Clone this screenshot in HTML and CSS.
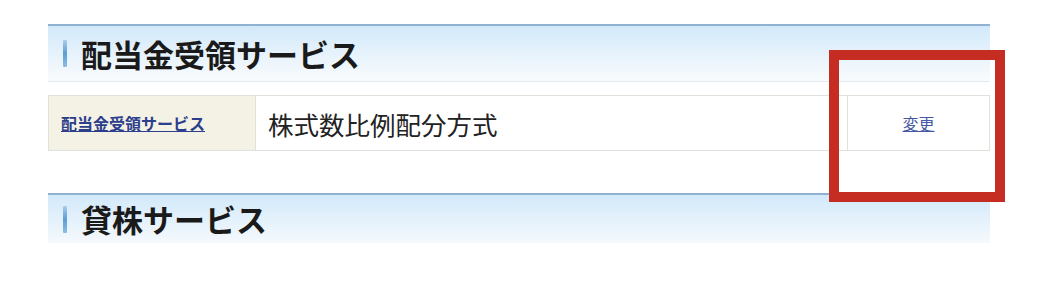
FILE: index.html
```html
<!DOCTYPE html>
<html lang="ja">
<head>
  <meta charset="UTF-8" />
  <meta name="viewport" content="width=device-width, initial-scale=1.0"/>
  <title>配当金受領サービス</title>
  <link rel="stylesheet" href="styles.css">
</head>
<body>
  <div class="page">
    <div class="content">
      <h2 class="section-title"><span class="marker"></span>配当金受領サービス</h2>

      <table class="info-table">
        <tr>
          <th><a href="#">配当金受領サービス</a></th>
          <td class="value">株式数比例配分方式</td>
          <td class="action"><a href="#">変更</a></td>
        </tr>
      </table>

      <h2 class="section-title last"><span class="marker"></span>貸株サービス</h2>
    </div>

    <div class="highlight"></div>
  </div>
</body>
</html>
```

FILE: styles.css
```css
body {
  margin: 0;
  background: #fff;
  font-family: "Noto Sans CJK JP", "Noto Sans", sans-serif;
  color: #1a1a1a;
}
.page {
  position: relative;
  padding: 24px 0 0 48px;
}
.content {
  width: 942px;
}
.section-title {
  display: flex;
  align-items: center;
  height: 55px;
  margin: 0;
  padding-left: 15px;
  border-top: 2px solid #8fb2d2;
  border-bottom: 1px solid #e3eaf0;
  background: linear-gradient(#d2e9fa, #eef6fc 70%, #f8fbfd);
  font-size: 31px;
  font-weight: bold;
  line-height: 1.2;
}
.section-title.last {
  margin-top: 42px;
  height: 48px;
  border-bottom: none;
  background: linear-gradient(#d2e9fa, #eef6fc 80%, #f4f9fd);
}
.marker {
  width: 4px;
  height: 27px;
  margin-right: 14px;
  border-radius: 1px;
  background: linear-gradient(#a9cdea, #5c9ed3 50%, #8cbde3);
}
.info-table {
  width: 100%;
  margin-top: 13px;
  border-collapse: collapse;
}
.info-table th,
.info-table td {
  height: 54px;
  padding: 0;
  border: 1px solid #e1e1dc;
}
.info-table th {
  width: 194px;
  padding-left: 12px;
  text-align: left;
  background: #f3f2e4;
  font-size: 16px;
  font-weight: bold;
}
.info-table th a {
  color: #2c3e8c;
}
.info-table .value {
  padding-left: 12px;
  font-size: 25.5px;
  color: #222;
}
.info-table .action {
  width: 141px;
  text-align: center;
  font-size: 16px;
}
.info-table .action a {
  color: #4558a3;
}
.highlight {
  position: absolute;
  left: 829px;
  top: 50px;
  width: 156px;
  height: 132px;
  border: 10px solid #c62d22;
}
```
